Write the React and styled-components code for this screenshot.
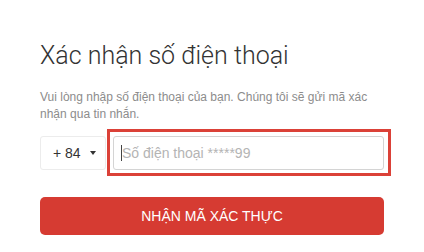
import React from "react";
import styled, { createGlobalStyle } from "styled-components";

const GlobalStyle = createGlobalStyle`
  html, body {
    margin: 0;
    padding: 0;
    background: #ffffff;
  }

  body {
    font-family: "Liberation Sans", Arial, sans-serif;
    color: #333;
  }
`;

const Wrapper = styled.div`
  width: 344px;
  padding: 41px 40px 0;
`;

const Title = styled.h1`
  margin: 0;
  font-family: Roboto, "Liberation Sans", sans-serif;
  font-size: 25px;
  font-weight: 300;
  line-height: 30px;
  color: #333;
`;

const Description = styled.p`
  margin: 18px 0 0;
  font-size: 12px;
  line-height: 17px;
  color: #8c8c8c;
`;

const PhoneRow = styled.div`
  margin-top: 13px;
  display: flex;
  align-items: center;
  gap: 7px;
`;

const CountrySelect = styled.div`
  box-sizing: border-box;
  width: 66px;
  height: 34px;
  padding: 0 9px 0 12px;
  display: flex;
  align-items: center;
  justify-content: space-between;
  border: 1px solid #ececec;
  border-radius: 3px;
  font-size: 14px;
  color: #333;
`;

const InputBox = styled.div`
  position: relative;
  flex: 1;

  &::after {
    content: "";
    position: absolute;
    top: -7px;
    left: -6px;
    right: -7px;
    bottom: -6px;
    border: 3px solid #db4138;
    pointer-events: none;
  }
`;

const PhoneInput = styled.input`
  box-sizing: border-box;
  display: block;
  width: 100%;
  height: 34px;
  padding: 0 8px;
  border: 1px solid #d4d4d4;
  border-radius: 3px;
  font-family: "Liberation Sans", Arial, sans-serif;
  font-size: 14px;
  color: #333;
  outline: none;

  &::placeholder {
    color: #b4b4b4;
  }
`;

const Caret = styled.span`
  position: absolute;
  left: 8px;
  top: 9px;
  width: 1px;
  height: 16px;
  background: #444;
`;

const SubmitButton = styled.button`
  margin-top: 27px;
  width: 100%;
  height: 38px;
  border: none;
  border-radius: 5px;
  background: #d63b32;
  color: #fff;
  font-family: "Liberation Sans", Arial, sans-serif;
  font-size: 14px;
  text-transform: uppercase;
  cursor: pointer;
`;

function ArrowDown() {
  return (
    <svg width="6" height="4" viewBox="0 0 6 4">
      <path d="M0 0H6L3 4Z" fill="#333" />
    </svg>
  );
}

export default function App() {
  return (
    <>
      <GlobalStyle />
      <Wrapper>
        <Title>Xác nhận số điện thoại</Title>
        <Description>
          Vui lòng nhập số điện thoại của bạn. Chúng tôi sẽ gửi mã xác nhận qua
          tin nhắn.
        </Description>
        <PhoneRow>
          <CountrySelect>
            <span>+ 84</span>
            <ArrowDown />
          </CountrySelect>
          <InputBox>
            <PhoneInput type="tel" placeholder="Số điện thoại *****99" />
            <Caret />
          </InputBox>
        </PhoneRow>
        <SubmitButton>Nhận mã xác thực</SubmitButton>
      </Wrapper>
    </>
  );
}
